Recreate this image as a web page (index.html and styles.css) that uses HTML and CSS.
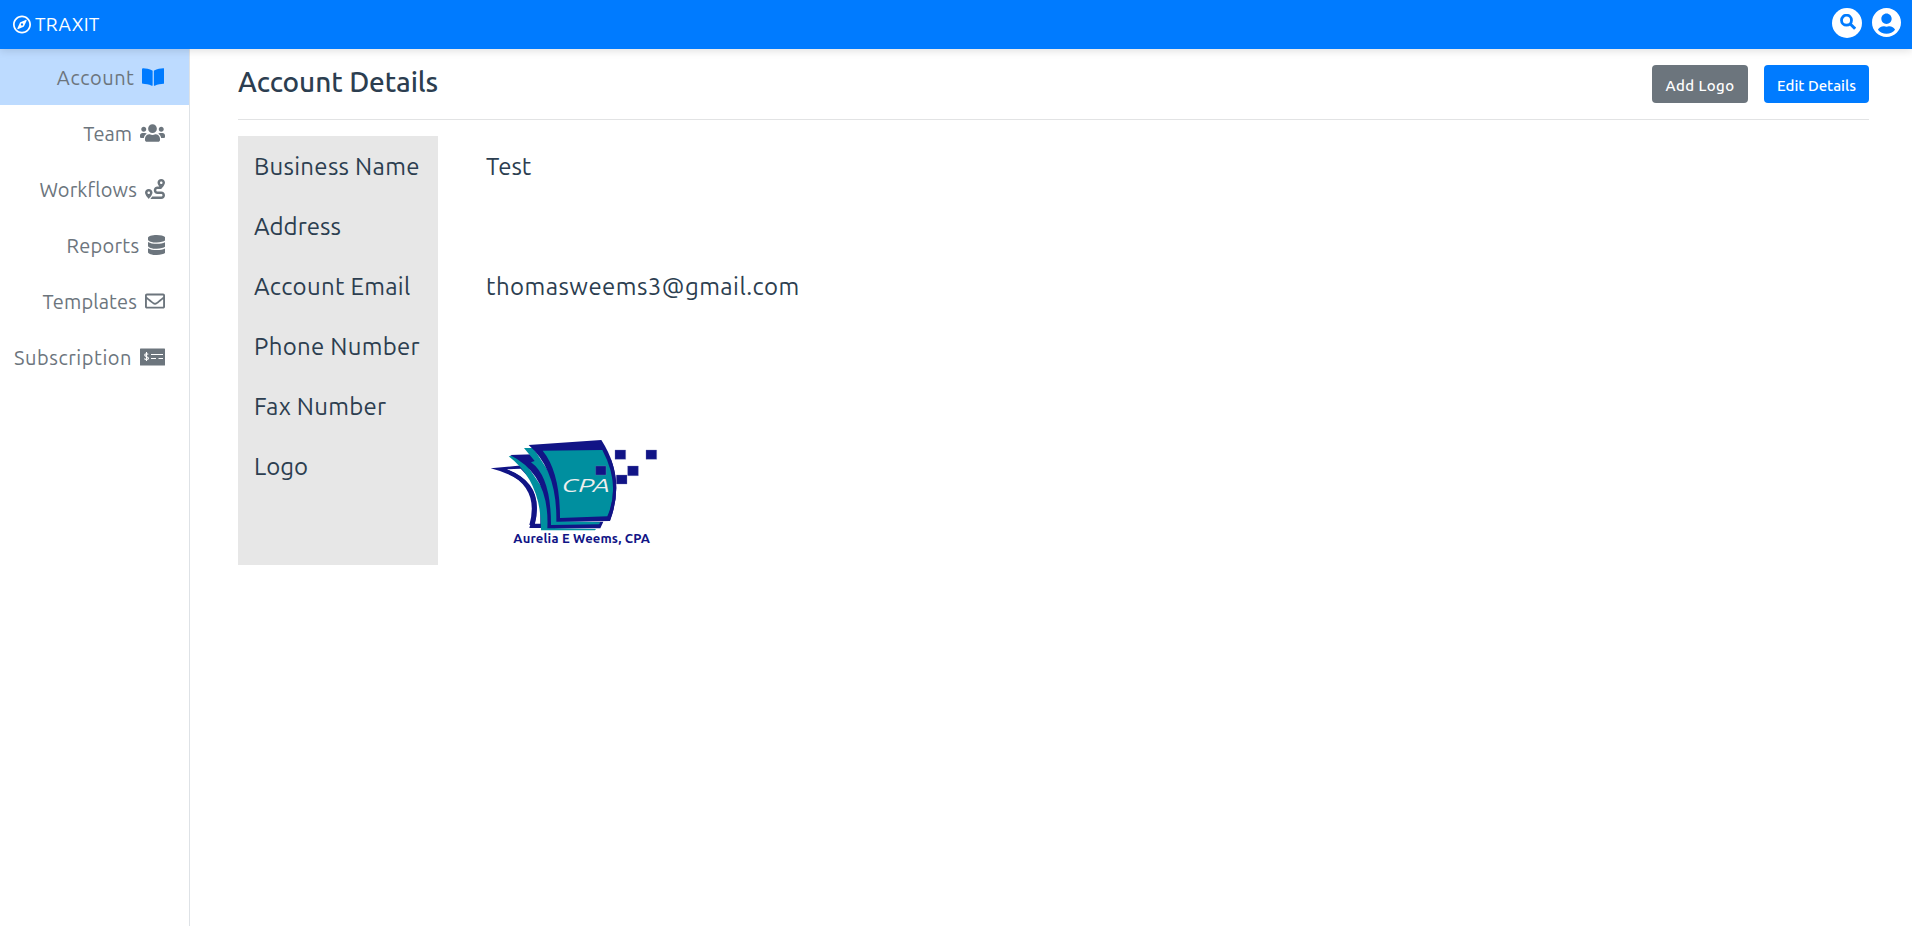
FILE: index.html
```html
<!DOCTYPE html>
<html lang="en">
<head>
<meta charset="utf-8">
<title>TRAXIT</title>
<link rel="stylesheet" href="styles.css">
</head>
<body>
<header class="topbar">
  <a class="brand"><svg class="brand-icon" viewBox="0 0 496 512"><path d="M347.94 129.86L203.6 195.83a31.938 31.938 0 0 0-15.77 15.77l-65.97 144.34c-7.61 16.65 9.54 33.81 26.2 26.2l144.34-65.97a31.938 31.938 0 0 0 15.77-15.77l65.97-144.34c7.61-16.66-9.54-33.81-26.2-26.2zm-77.36 148.72c-12.47 12.47-32.69 12.47-45.16 0-12.47-12.47-12.47-32.69 0-45.16 12.47-12.47 32.69-12.47 45.16 0 12.47 12.47 12.47 32.69 0 45.16zM248 8C111.03 8 0 119.03 0 256s111.03 248 248 248 248-111.03 248-248S384.97 8 248 8zm0 448c-110.28 0-200-89.72-200-200S137.72 56 248 56s200 89.72 200 200-89.72 200-200 200z"/></svg><span>TRAXIT</span></a>
  <div class="tools">
    <span class="search"><svg viewBox="0 0 16 16"><circle cx="6.5" cy="6.2" r="5" fill="none" stroke="currentColor" stroke-width="2.8"/><path d="M10.3 10l4.8 4.8" stroke="currentColor" stroke-width="3"/></svg></span>
    <svg class="user" viewBox="0 8 496 496"><path d="M248 8C111 8 0 119 0 256s111 248 248 248 248-111 248-248S385 8 248 8zm0 96c48.6 0 88 39.4 88 88s-39.4 88-88 88-88-39.4-88-88 39.4-88 88-88zm0 344c-58.7 0-111.3-26.6-146.5-68.2 18.8-35.4 55.6-59.8 98.5-59.8 2.4 0 4.8.4 7.1 1.1 13 4.2 26.6 6.9 40.9 6.9 14.3 0 28-2.7 40.9-6.9 2.3-.7 4.7-1.1 7.1-1.1 42.9 0 79.7 24.4 98.5 59.8C359.3 421.4 306.7 448 248 448z"/></svg>
  </div>
</header>
<div class="shell">
  <nav class="sidebar">
    <a class="item active"><span>Account</span><svg viewBox="0 0 576 512"><path d="M542.22 32.05c-54.8 3.11-163.72 14.43-230.96 55.59-4.64 2.84-7.27 7.89-7.27 13.17v363.87c0 11.55 12.63 18.85 23.28 13.49 69.18-34.82 169.23-44.32 218.7-46.92 16.89-.89 30.02-14.43 30.02-30.66V62.75c.01-17.71-15.35-31.74-33.77-30.7zM264.73 87.64C197.5 46.48 88.58 35.17 33.78 32.05 15.36 31.01 0 45.04 0 62.75V400.6c0 16.24 13.13 29.78 30.02 30.66 49.49 2.6 149.59 12.11 218.77 46.95 10.62 5.35 23.21-1.94 23.21-13.46V100.63c0-5.29-2.62-10.14-7.27-12.99z"/></svg></a>
    <a class="item team"><span>Team</span><svg viewBox="0 0 640 512"><path d="M96 224c35.3 0 64-28.7 64-64s-28.7-64-64-64-64 28.7-64 64 28.7 64 64 64zm448 0c35.3 0 64-28.7 64-64s-28.7-64-64-64-64 28.7-64 64 28.7 64 64 64zm32 32h-64c-17.6 0-33.5 7.1-45.1 18.6 40.3 22.1 68.9 62 75.1 109.4h66c17.7 0 32-14.3 32-32v-32c0-35.3-28.7-64-64-64zm-256 0c61.9 0 112-50.1 112-112S381.9 32 320 32 208 82.1 208 144s50.1 112 112 112zm76.8 32h-8.3c-20.8 10-43.9 16-68.5 16s-47.6-6-68.5-16h-8.3C179.6 288 128 339.6 128 403.2V432c0 26.5 21.5 48 48 48h288c26.5 0 48-21.5 48-48v-28.8c0-63.6-51.6-115.2-115.2-115.2zm-223.7-13.4C161.5 263.1 145.6 256 128 256H64c-35.3 0-64 28.7-64 64v32c0 17.7 14.3 32 32 32h65.9c6.3-47.4 34.9-87.3 75.2-109.4z"/></svg></a>
    <a class="item tight"><span>Workflows</span><svg viewBox="0 0 512 512"><path d="M416 320h-96c-17.6 0-32-14.4-32-32s14.4-32 32-32h96s96-107 96-160-43-96-96-96-96 43-96 96c0 25.5 22.2 63.4 45.3 96H320c-52.9 0-96 43.1-96 96s43.1 96 96 96h96c17.6 0 32 14.4 32 32s-14.4 32-32 32H185.5c-16 24.8-33.8 47.7-47.3 64H416c52.9 0 96-43.1 96-96s-43.1-96-96-96zm0-256c17.7 0 32 14.3 32 32s-14.3 32-32 32-32-14.3-32-32 14.3-32 32-32zM96 256c-53 0-96 43-96 96s96 160 96 160 96-107 96-160-43-96-96-96zm0 128c-17.7 0-32-14.3-32-32s14.3-32 32-32 32 14.3 32 32-14.3 32-32 32z"/></svg></a>
    <a class="item reports"><span>Reports</span><svg viewBox="0 0 448 512"><path d="M448 73.143v45.714C448 159.143 347.667 192 224 192S0 159.143 0 118.857V73.143C0 32.857 100.333 0 224 0s224 32.857 224 73.143zM448 176v102.857C448 319.143 347.667 352 224 352S0 319.143 0 278.857V176c48.125 33.143 136.208 48.572 224 48.572S399.874 209.143 448 176zm0 160v102.857C448 479.143 347.667 512 224 512S0 479.143 0 438.857V336c48.125 33.143 136.208 48.572 224 48.572S399.874 369.143 448 336z"/></svg></a>
    <a class="item tight"><span>Templates</span><svg viewBox="0 0 512 512"><path d="M464 64H48C21.49 64 0 85.49 0 112v288c0 26.51 21.49 48 48 48h416c26.51 0 48-21.49 48-48V112c0-26.51-21.49-48-48-48zm0 48v40.805c-22.422 18.259-58.168 46.651-134.587 106.49-16.841 13.247-50.201 45.072-73.413 44.701-23.208.375-56.579-31.459-73.413-44.701C106.18 199.465 70.425 171.067 48 152.805V112h416zM48 400V214.398c22.914 18.251 55.409 43.862 104.938 82.646 21.857 17.205 60.134 55.186 103.062 54.955 42.717.231 80.509-37.199 103.053-54.947 49.528-38.783 82.032-64.401 104.947-82.653V400H48z"/></svg></a>
    <a class="item"><span>Subscription</span><svg viewBox="0 0 25 20"><rect y="1.5" width="25" height="17" rx=".6"/><path d="M11 7.500h12M11 11.500h5M18.500 11.500h4.500" stroke="#fff" fill="none"/><path d="M8.300 7.300C7.500 6.500 4.700 6.300 4.700 8.100S8.500 9.400 8.500 11.200 5.300 12.800 4.300 11.700M6.500 5v9" stroke="#fff" stroke-width="1.100" fill="none"/></svg></a>
  </nav>
  <main class="content">
    <div class="title-row">
      <h1>Account Details</h1>
      <div class="actions"><button class="btn gray">Add Logo</button><button class="btn blue">Edit Details</button></div>
    </div>
    <dl class="details">
      <dt class="wide">Business Name</dt><dd>Test</dd>
      <dt>Address</dt><dd></dd>
      <dt class="wide">Account Email</dt><dd class="email">thomasweems3@gmail.com</dd>
      <dt class="wide">Phone Number</dt><dd></dd>
      <dt class="wide">Fax Number</dt><dd></dd>
      <dt>Logo</dt>
      <dd class="logo-cell"><svg class="logo" viewBox="0 0 570 390">
        <path fill="#111486" d="M32 130L128 121 190 200 200 309H148Q162 265 159 230Q150 160 32 130Z"/>
        <path fill="#fff" d="M80 133L122 131Q174 180 181 230V296H164Q195 175 80 133Z"/>
        <path fill="#111486" d="M72 130Q196 174 164 300H148Q182 180 60 134Z"/>
        <path fill="#008f9f" d="M86 94L120 90 215 230 220 309 348 312 345 316H183Q185 170 86 94Z"/>
        <path fill="#111486" d="M90 90L160 88 230 200 240 290H370L361 310H202Q210 150 90 90Z"/>
        <path fill="#008f9f" d="M132 69H160L238 190 240 288 361 292 357 298 213 300Q213 155 153 112L164 108Z"/>
        <path fill="#111486" d="M146 60L364 45Q438 160 390 288L229 290Q232 135 146 60Z"/>
        <path fill="#008f9f" d="M188 77L367 75Q423 180 382 274L240 279Q240 140 188 77Z"/>
        <path fill="#111486" stroke="#777bb9" stroke-width="1" d="M405 75h32v28h-32zM498 75h32v28h-32zM347 123h31v27h-31zM443 123h32v29h-32zM409 150h32v27h-32z"/>
        <path fill="none" stroke="#111486" stroke-width="9" d="M389 105Q421 192 386 284"/>
        <text class="cpa" x="245" y="202" textLength="145" lengthAdjust="spacingAndGlyphs">CPA</text>
        <text class="firm" x="100" y="353" textLength="410">Aurelia E Weems, CPA</text>
      </svg></dd>
    </dl>
  </main>
</div>
</body>
</html>
```
FILE: styles.css
```css
* { box-sizing: border-box; }
body { margin: 0; height: 926px; overflow: hidden; display: flex; flex-direction: column; background: #fff; color: #2c3e50; font-family: Ubuntu, "Noto Sans", sans-serif; }
svg { display: block; fill: currentColor; }
.topbar { height: 49px; flex: none; display: flex; justify-content: space-between; padding: 0 11px 0 13px; background: #007bff; color: #fff; box-shadow: 0 2px 8px rgba(0,0,0,.12); position: relative; z-index: 1; }
.brand { display: flex; align-items: center; gap: 4px; font-size: 19px; letter-spacing: .3px; }
.brand span { padding-bottom: 1px; }
.brand-icon { width: 18px; height: 19px; }
.tools { display: flex; gap: 10px; padding-top: 8px; }
.search { width: 30px; height: 30px; border-radius: 50%; background: #fff; color: #007bff; padding: 6px 6px 8px 8px; }
.search svg { width: 16px; height: 16px; }
.user { width: 29px; height: 29px; }
.shell { flex: 1; display: flex; }
.sidebar { width: 190px; flex: none; border-right: 1px solid #dee2e6; }
.item { height: 56px; padding-right: 24px; display: flex; align-items: center; justify-content: flex-end; gap: 8px; color: #6c757d; font-size: 20px; letter-spacing: .54px; }
.item svg { height: 20px; }
.team { letter-spacing: 0; }
.tight { letter-spacing: .13px; }
.reports { letter-spacing: .3px; }
.active { background: #bddbff; padding-right: 25px; gap: 7px; }
.active svg { color: #007bff; }
.content { flex: 1; padding: 0 43px 0 48px; }
.title-row { height: 71px; display: flex; justify-content: space-between; align-items: flex-start; padding-top: 16px; border-bottom: 1px solid #e2e3e4; }
h1 { margin: -1px 0 0; font-size: 28px; line-height: 36px; font-weight: 500; letter-spacing: -.07px; }
.actions { display: flex; gap: 16px; }
.btn { height: 38px; padding: 2px 0 0; border: 0; border-radius: 4px; color: #fff; font: 500 15px Ubuntu, "Noto Sans", sans-serif; }
.gray { width: 96px; background: #6c757d; letter-spacing: .4px; }
.blue { width: 105px; background: #007bff; }
.details { margin: 16px 0 0; display: grid; grid-template-columns: 200px 1fr; grid-template-rows: repeat(5, 60px) 129px; font-size: 24px; line-height: 30px; font-weight: 400; }
dt { background: #e7e7e7; padding: 16px 16px 14px; white-space: nowrap; }
dd { margin: 0; padding: 16px 48px 14px; }
.wide { letter-spacing: .29px; }
.email { letter-spacing: .45px; }
.details .logo-cell { padding: 0 42px; }
.logo { width: 190px; height: 130px; margin-top: -11px; }
.cpa { fill: #eee; font: italic 400 54px Ubuntu, sans-serif; }
.firm { fill: #111486; font: 700 39px Ubuntu, sans-serif; }
```
